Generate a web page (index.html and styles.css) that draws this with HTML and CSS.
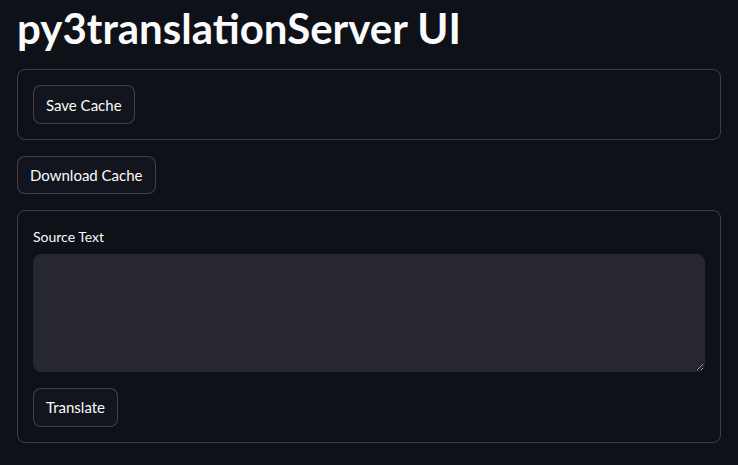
FILE: index.html
```html
<!DOCTYPE html>
<html lang="en">
<head>
<meta charset="utf-8">
<title>py3translationServer UI</title>
<link rel="stylesheet" href="styles.css">
</head>
<body>
<main class="main">
  <h1 class="title">py3translationServer UI</h1>
  <section class="box">
    <button class="btn" type="button">Save Cache</button>
  </section>
  <div class="row">
    <button class="btn" type="button">Download Cache</button>
  </div>
  <section class="box">
    <label class="label" for="src">Source Text</label>
    <textarea id="src" class="area"></textarea>
    <div class="row">
      <button class="btn" type="button">Translate</button>
    </div>
  </section>
</main>
</body>
</html>
```

FILE: styles.css
```css
html, body {
  margin: 0;
  background: #0e1117;
  color: #fafafa;
  font-family: Lato, "Liberation Sans", sans-serif;
}
.main {
  display: flex;
  flex-direction: column;
  gap: 16px;
  padding: 0 17px;
}
.title {
  margin: 0;
  height: 53.4px;
  font-size: 42px;
  line-height: 56px;
  font-weight: 700;
  color: #fafafa;
}
.box {
  display: flex;
  flex-direction: column;
  align-items: stretch;
  border: 1px solid rgba(250, 250, 250, 0.2);
  border-radius: 8px;
  padding: 15px;
}
.row {
  display: flex;
}
.box > .btn {
  align-self: flex-start;
}
.box .row {
  margin-top: 16px;
}
.btn {
  height: 38.4px;
  padding: 0 12px;
  border: 1px solid rgba(250, 250, 250, 0.2);
  border-radius: 8px;
  background: #12151d;
  color: #fafafa;
  font-family: inherit;
  font-size: 15px;
  cursor: pointer;
}
.label {
  display: block;
  height: 24px;
  line-height: 22px;
  margin-bottom: 4px;
  font-size: 14px;
}
.area {
  display: block;
  box-sizing: border-box;
  width: 100%;
  height: 118px;
  margin: 0;
  background: #262730;
  border: 1px solid #262730;
  border-radius: 8px;
  color: #fafafa;
  resize: vertical;
}
```
